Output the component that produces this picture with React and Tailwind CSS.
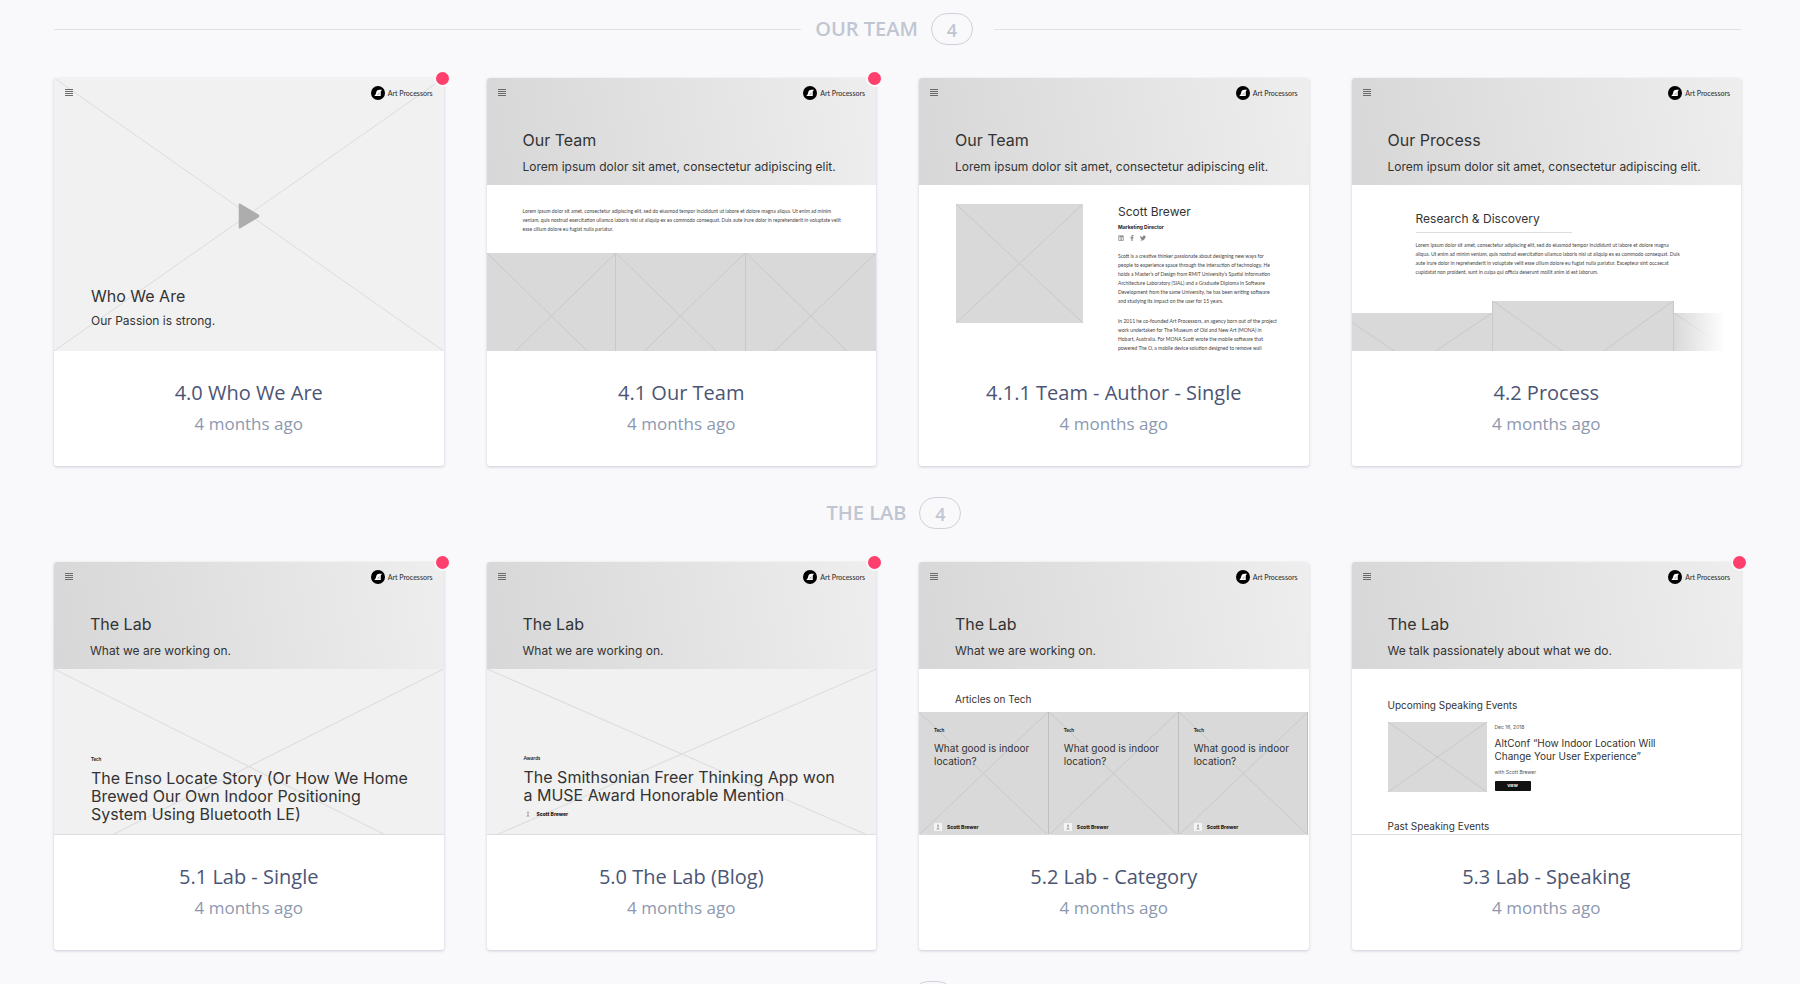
import clsx from 'clsx'
import { FaFacebookF, FaLinkedin, FaTwitter } from 'react-icons/fa'

// Wireframe placeholder: a grey box with a line to each corner
function Placeholder({ className, light, children }) {
  return (
    <div className={clsx('relative shrink-0', light ? 'bg-[#f1f1f1]' : 'bg-[#d9d9d9]', className)}>
      <svg
        className={clsx('absolute inset-0 h-full w-full', light ? 'text-[#dcdcdc]' : 'text-[#c8c8c8]')}
        viewBox="0 0 100 100"
        preserveAspectRatio="none"
        stroke="currentColor"
        aria-hidden="true"
      >
        <path d="M0 0L100 100M100 0L0 100" fill="none" vectorEffect="non-scaling-stroke" />
      </svg>
      {children}
    </div>
  )
}

function Lines({ lines, className }) {
  return (
    <p className={clsx('whitespace-nowrap font-[Lato,sans-serif] text-[5px] leading-[9px] text-[#444444]', className)}>
      {lines.map((line) => (
        <span key={line} className="block">{line}</span>
      ))}
    </p>
  )
}

function Logo() {
  return (
    <div className="flex items-center gap-[3px]">
      <svg className="h-[14px] w-[14px]" viewBox="0 0 28 28" aria-hidden="true">
        <circle cx="14" cy="14" r="14" fill="#000000" />
        <path d="M6.500 20C9 18.500 9.500 16 10.500 12.500C11.500 9 13.500 7.500 17 7.500H22L19.500 11L19.500 20Z" fill="#ffffff" />
        <path d="M11.500 17.500C14 16.500 14 13 17 12.500V17.500Z" fill="#bbbbbb" />
      </svg>
      <span className="font-[Lato,sans-serif] text-[7px] leading-[14px] font-medium text-[#333333]">Art Processors</span>
    </div>
  )
}

function TopBar() {
  return (
    <div className="flex items-center justify-between px-[11px] pt-2">
      <svg className="h-2 w-2" viewBox="0 0 8 8" stroke="#6b6b6b" aria-hidden="true">
        <path d="M0 0.500H8M0 2.500H8M0 4.500H8M0 6.500H8" />
      </svg>
      <Logo />
    </div>
  )
}

function Hero({ title, text }) {
  return (
    <div className="h-[107px] shrink-0 bg-linear-80 from-[#d7d7d7] to-[#eeeeee]">
      <TopBar />
      <h4 className="mt-7 pl-9 text-[16px] leading-6 text-[#333333]">{title}</h4>
      <p className="mt-[5px] whitespace-nowrap pl-9 text-[12px] leading-5 text-[#333333]">{text}</p>
    </div>
  )
}

function Author({ boxed }) {
  return (
    <div className="flex items-center gap-[5px]">
      <svg className={clsx('h-2 w-2 rounded-[1px] text-[#aaaaaa]', boxed && 'bg-[#f4f4f4]')} viewBox="0 0 8 8" fill="currentColor" aria-hidden="true">
        <circle cx="4" cy="2.500" r="1" />
        <path d="M3.500 3H4.500V5L6 6.500H2L3.500 5Z" />
      </svg>
      <span className="text-[5px] leading-2 font-extrabold text-[#222222]">Scott Brewer</span>
    </div>
  )
}

function WhoWeAre() {
  return (
    <Placeholder light className="h-[273px] text-[#333333]">
      <div className="relative flex h-full flex-col">
        <TopBar />
        <svg className="absolute top-[125px] left-1/2 h-[26px] w-[21px] -translate-x-1/2 text-[#adadad]" viewBox="0 0 21 26" fill="currentColor" aria-hidden="true">
          <path d="M0 1.500Q0 0 1.500 0.600L20 11.500Q22 13 20 14.500L1.500 25.400Q0 26 0 24.500Z" />
        </svg>
        <div className="mt-auto pb-[18px] pl-[37px]">
          <h4 className="text-[16px] leading-6">Who We Are</h4>
          <p className="mt-px text-[12px] leading-6">Our Passion is strong.</p>
        </div>
      </div>
    </Placeholder>
  )
}

function OurTeam() {
  return (
    <>
      <Hero title="Our Team" text="Lorem ipsum dolor sit amet, consectetur adipiscing elit." />
      <div className="h-[68px] shrink-0 pt-[22px] pl-9">
        <Lines
          lines={[
            'Lorem ipsum dolor sit amet, consectetur adipiscing elit, sed do eiusmod tempor incididunt ut labore et dolore magna aliqua. Ut enim ad minim',
            'veniam, quis nostrud exercitation ullamco laboris nisi ut aliquip ex ea commodo consequat. Duis aute irure dolor in reprehenderit in voluptate velit',
            'esse cillum dolore eu fugiat nulla pariatur.',
          ]}
        />
      </div>
      <div className="grid grid-cols-3">
        {[0, 1, 2].map((n) => (
          <Placeholder key={n} className="h-[126px] border-r border-[#c8c8c8] last:border-r-0" />
        ))}
      </div>
    </>
  )
}

function TeamAuthor() {
  return (
    <>
      <Hero title="Our Team" text="Lorem ipsum dolor sit amet, consectetur adipiscing elit." />
      <div className="flex pl-[37px] pt-[19px]">
        <Placeholder className="h-[119px] w-[127px]" />
        <div className="pl-[35px]">
          <h4 className="text-[12px] leading-4 text-[#333333]">Scott Brewer</h4>
          <p className="mt-[3px] text-[5px] leading-2 font-bold text-[#222222]">Marketing Director</p>
          <div className="mt-1 flex gap-[5px] text-[#888888]">
            <FaLinkedin size={6} />
            <FaFacebookF size={6} />
            <FaTwitter size={6} />
          </div>
          <Lines
            className="mt-[11px]"
            lines={[
              'Scott is a creative thinker passionate about designing new ways for',
              'people to experience space through the interaction of technology.  He',
              'holds a Master’s of Design from RMIT University’s Spatial Information',
              'Architecture Laboratory (SIAL) and a Graduate Diploma in Software',
              'Development from the same University, he has been writing software',
              'and studying its impact on the user for 15 years.',
            ]}
          />
          <Lines
            className="mt-[11px]"
            lines={[
              'In 2011 he co-founded Art Processors, an agency born out of the project',
              'work undertaken for The Museum of Old and New Art (MONA) in',
              'Hobart, Australia.  For MONA Scott wrote the mobile software that',
              'powered The O, a mobile device solution designed to remove wall',
            ]}
          />
        </div>
      </div>
    </>
  )
}

function Process() {
  return (
    <>
      <Hero title="Our Process" text="Lorem ipsum dolor sit amet, consectetur adipiscing elit." />
      <div className="h-[116px] shrink-0 pt-[24px] pl-16">
        <h4 className="text-[12px] leading-5 text-[#333333]">Research &amp; Discovery</h4>
        <div className="mt-[3px] h-px w-[156px] bg-[#dddddd]" />
        <Lines
          className="mt-2"
          lines={[
            'Lorem ipsum dolor sit amet, consectetur adipiscing elit, sed do eiusmod tempor incididunt ut labore et dolore magna',
            'aliqua. Ut enim ad minim veniam, quis nostrud exercitation ullamco laboris nisi ut aliquip ex ea commodo consequat. Duis',
            'aute irure dolor in reprehenderit in voluptate velit esse cillum dolore eu fugiat nulla pariatur. Excepteur sint occaecat',
            'cupidatat non proident, sunt in culpa qui officia deserunt mollit anim id est laborum.',
          ]}
        />
      </div>
      <div className="-ml-[14px] flex">
        <Placeholder className="mt-3 h-[104px] w-[154px]" />
        <Placeholder className="h-[130px] w-[182px] border-x border-[#c8c8c8]" />
        <Placeholder className="mt-3 h-[104px] w-[154px]">
          <div className="absolute inset-0 bg-linear-to-r from-transparent to-white to-33%" />
        </Placeholder>
      </div>
    </>
  )
}

function LabSingle() {
  return (
    <>
      <Hero title="The Lab" text="What we are working on." />
      <Placeholder light className="h-[195px]">
        <div className="relative whitespace-nowrap pt-[86px] pl-[37px]">
          <p className="font-[Lato,sans-serif] text-[5px] leading-2 font-bold text-[#222222]">Tech</p>
          <h4 className="mt-[6px] text-[16px] leading-[18px] text-[#333333]">
            The Enso Locate Story (Or How We Home
            <br />
            Brewed Our Own Indoor Positioning
            <br />
            System Using Bluetooth LE)
          </h4>
        </div>
      </Placeholder>
    </>
  )
}

function LabBlog() {
  return (
    <>
      <Hero title="The Lab" text="What we are working on." />
      <Placeholder light className="h-[170px]">
        <div className="relative whitespace-nowrap pt-[85px] pl-[37px]">
          <p className="font-[Lato,sans-serif] text-[5px] leading-2 font-bold text-[#222222]">Awards</p>
          <h4 className="mt-[6px] mb-[6px] text-[16px] leading-[18px] text-[#333333]">
            The Smithsonian Freer Thinking App won
            <br />
            a MUSE Award Honorable Mention
          </h4>
          <Author />
        </div>
      </Placeholder>
    </>
  )
}

function LabCategory() {
  return (
    <>
      <Hero title="The Lab" text="What we are working on." />
      <h4 className="h-[43px] shrink-0 pt-[22px] pl-9 text-[10px] leading-4 text-[#333333]">Articles on Tech</h4>
      <div className="grid grid-cols-3">
        {[0, 1, 2].map((n) => (
          <Placeholder key={n} className="h-[123px] border-r border-[#bfbfbf]">
            <div className="relative flex h-full flex-col whitespace-nowrap pt-[14px] pb-1 pl-[15px]">
              <p className="font-[Lato,sans-serif] text-[5px] leading-2 font-bold text-[#222222]">Tech</p>
              <h5 className="mt-2 mb-auto text-[10px] leading-[13px] text-[#333333]">
                What good is indoor
                <br />
                location?
              </h5>
              <Author boxed />
            </div>
          </Placeholder>
        ))}
      </div>
    </>
  )
}

function LabSpeaking() {
  return (
    <>
      <Hero title="The Lab" text="We talk passionately about what we do." />
      <div className="whitespace-nowrap pt-[28px] pl-9 text-[#333333]">
        <h4 className="text-[10px] leading-4">Upcoming Speaking Events</h4>
        <div className="mt-[9px] flex gap-2">
          <Placeholder className="h-[70px] w-[99px]" />
          <div>
            <p className="mt-px text-[5px] leading-2 text-[#555555]">Dec 16, 2018</p>
            <h5 className="mt-[6px] text-[10px] leading-[13px]">
              AltConf “How Indoor Location Will
              <br />
              Change Your User Experience”
            </h5>
            <p className="mt-[5px] text-[5px] leading-2 text-[#555555]">with Scott Brewer</p>
            <button className="mt-[5px] block h-[10px] w-9 rounded-[1px] bg-[#111111] text-center text-[4px] leading-[10px] font-bold text-white">
              VIEW
            </button>
          </div>
        </div>
        <h4 className="mt-[26px] text-[10px] leading-4">Past Speaking Events</h4>
      </div>
    </>
  )
}

const SECTIONS = [
  {
    title: 'OUR TEAM',
    ruled: true,
    screens: [
      { name: '4.0 Who We Are', Preview: WhoWeAre, unread: true },
      { name: '4.1 Our Team', Preview: OurTeam, unread: true },
      { name: '4.1.1 Team - Author - Single', Preview: TeamAuthor },
      { name: '4.2 Process', Preview: Process },
    ],
  },
  {
    title: 'THE LAB',
    screens: [
      { name: '5.1 Lab - Single', Preview: LabSingle, unread: true, lined: true },
      { name: '5.0 The Lab (Blog)', Preview: LabBlog, unread: true, lined: true },
      { name: '5.2 Lab - Category', Preview: LabCategory, lined: true },
      { name: '5.3 Lab - Speaking', Preview: LabSpeaking, unread: true, lined: true },
    ],
  },
]

function SectionHeader({ title, count, ruled }) {
  const rule = clsx('h-px flex-1', ruled && 'bg-[#dfe3e8]')

  return (
    <div className="flex items-center">
      <div className={rule} />
      <h2 className="ml-[14px] min-w-16 text-[20px] leading-8 font-semibold text-[#c0c6d1]">{title}</h2>
      <span className="mr-[21px] ml-[13px] h-8 w-[42px] rounded-full border border-[#cdd1d9] text-center text-[18px] leading-8 font-semibold text-[#c0c6d1]">
        {count}
      </span>
      <div className={rule} />
    </div>
  )
}

function ScreenCard({ name, Preview, unread, lined }) {
  return (
    <article className="relative rounded-[3px] bg-white shadow-[0_1px_3px_rgba(60,70,100,0.25)]">
      <div
        className={clsx(
          'flex h-[273px] flex-col overflow-hidden rounded-t-[3px] font-[Inter,sans-serif]',
          lined && 'border-b border-[#dcdfe0]'
        )}
      >
        <Preview />
      </div>
      <div className="pt-7 pb-[30px] text-center">
        <h3 className="text-[20px] leading-7 text-[#4b5574]">
          <a href="#">{name}</a>
        </h3>
        <p className="mt-[5px] text-[17px] leading-6 text-[#8d98b0]">4 months ago</p>
      </div>
      {unread && (
        <span className="absolute -top-2 -right-[7px] h-[17px] w-[17px] rounded-full border-2 border-[#f9f9fc] bg-[#ff3f6c]" />
      )}
    </article>
  )
}

export default function App() {
  return (
    <main className="flex h-screen flex-col gap-[31px] overflow-hidden bg-[#f9f9fc] pt-[13px] pr-[59px] pl-[54px] font-['Open_Sans',sans-serif]">
      {SECTIONS.map(({ title, ruled, screens }) => (
        <section key={title} className="shrink-0">
          <SectionHeader title={title} count={screens.length} ruled={ruled} />
          <div className="mt-[33px] grid grid-cols-4 gap-[43px]">
            {screens.map((screen) => (
              <ScreenCard key={screen.name} {...screen} />
            ))}
          </div>
        </section>
      ))}
      {/* Next section, still empty */}
      <section className="shrink-0">
        <SectionHeader />
      </section>
    </main>
  )
}
